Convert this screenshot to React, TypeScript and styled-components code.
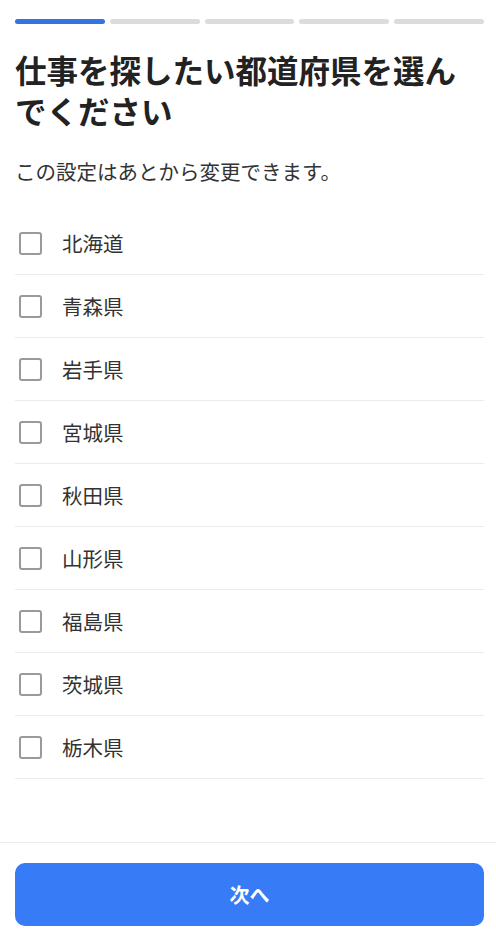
import React, { useState } from "react";
import styled, { createGlobalStyle } from "styled-components";

const GlobalStyle = createGlobalStyle`
  html, body { margin: 0; padding: 0; background: #fff; }
  body {
    font-family: "Noto Sans CJK JP", "Noto Sans", sans-serif;
    color: #222;
  }
  * { box-sizing: border-box; }
`;

const Page = styled.div`
  display: flex;
  flex-direction: column;
  height: 938px;
  width: 496px;
`;

const Main = styled.div`
  flex: 1;
  padding: 19px 12px 0 15px;
  overflow: hidden;
`;

const Progress = styled.div`
  display: grid;
  grid-template-columns: repeat(5, 1fr);
  gap: 5px;
`;

const Segment = styled.div<{ $active: boolean }>`
  height: 5px;
  border-radius: 3px;
  background: ${(p) => (p.$active ? "#3374e0" : "#dcdcdc")};
`;

const Title = styled.h1`
  margin: 25px 15px 0 0;
  font-size: 31.5px;
  line-height: 41px;
  font-weight: 700;
  color: #222;
  letter-spacing: 0;
`;

const Subtitle = styled.p`
  margin: 25px 0 0;
  font-size: 20.5px;
  line-height: 30px;
  color: #333;
`;

const List = styled.div`
  margin-top: 26px;
  display: flex;
  flex-direction: column;
`;

const Row = styled.label`
  display: flex;
  align-items: center;
  gap: 20px;
  height: 63px;
  padding-left: 4px;
  border-bottom: 1px solid #ebebeb;
  cursor: pointer;
  font-size: 20.5px;
  color: #333;
`;

const Box = styled.span<{ $checked: boolean }>`
  width: 23px;
  height: 23px;
  border: 2px solid #9a9a9a;
  border-radius: 3px;
  background: ${(p) => (p.$checked ? "#3374e0" : "#fff")};
  flex-shrink: 0;
`;

const Footer = styled.div`
  border-top: 1px solid #ebebeb;
  padding: 20px 12px 12px 15px;
`;

const Button = styled.button`
  width: 100%;
  height: 63px;
  border: none;
  border-radius: 10px;
  background: #377bf6;
  color: #fff;
  font-family: "Noto Sans CJK JP", "Noto Sans", sans-serif;
  font-size: 20px;
  font-weight: 700;
`;

const prefectures = [
  "北海道",
  "青森県",
  "岩手県",
  "宮城県",
  "秋田県",
  "山形県",
  "福島県",
  "茨城県",
  "栃木県",
];

export default function App() {
  const [checked, setChecked] = useState<Record<string, boolean>>({});
  return (
    <>
      <GlobalStyle />
      <Page>
        <Main>
          <Progress>
            {[0, 1, 2, 3, 4].map((i) => (
              <Segment key={i} $active={i === 0} />
            ))}
          </Progress>
          <Title>仕事を探したい都道府県を選んでください</Title>
          <Subtitle>この設定はあとから変更できます。</Subtitle>
          <List>
            {prefectures.map((p) => (
              <Row
                key={p}
                onClick={() => setChecked((c) => ({ ...c, [p]: !c[p] }))}
              >
                <Box $checked={!!checked[p]} />
                {p}
              </Row>
            ))}
          </List>
        </Main>
        <Footer>
          <Button>次へ</Button>
        </Footer>
      </Page>
    </>
  );
}
